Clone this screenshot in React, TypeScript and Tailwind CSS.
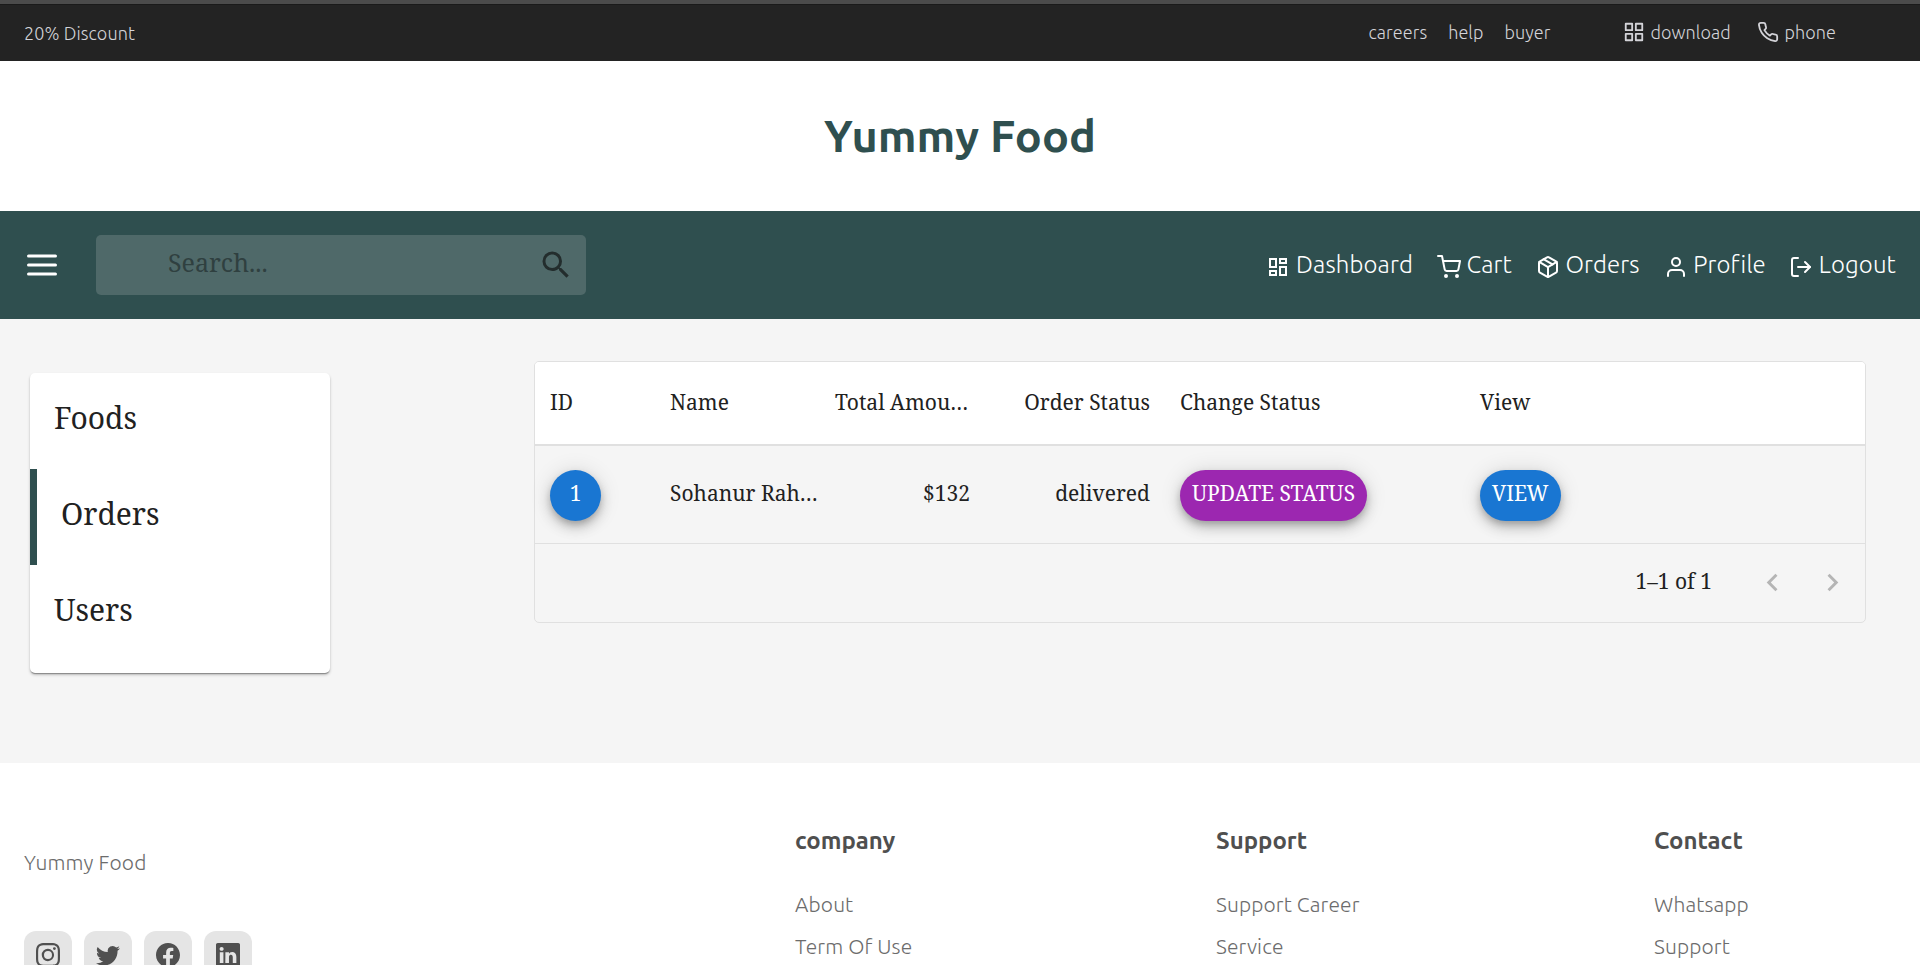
import type { ReactNode } from "react";
import { FiGrid, FiLogOut, FiMenu, FiPackage, FiPhone, FiShoppingCart, FiUser } from "react-icons/fi";
import { MdChevronLeft, MdChevronRight, MdOutlineDashboard, MdSearch } from "react-icons/md";
import { BsFacebook, BsInstagram, BsLinkedin, BsTwitter } from "react-icons/bs";

function TopBar() {
  return (
    <div className="flex h-[61px] items-center justify-between border-t-4 border-[#4b4b4b] bg-[#232323] pb-[2px] pl-6 pr-[84px] text-[18px] leading-[24px] font-light tracking-[0.08px] text-[#d3d3d8] shadow-[inset_0_1px_0_#1a1a1a]">
      <span className="pt-[2px]">20% Discount</span>
      <div className="flex items-center">
        <div className="flex w-[255px] gap-[21px]">
          <span>careers</span>
          <span>help</span>
          <span>buyer</span>
        </div>
        <div className="flex w-[134px] items-center gap-[5px]">
          <FiGrid className="size-[22px]" />
          <span>download</span>
        </div>
        <div className="flex items-center gap-[5px]">
          <FiPhone className="size-[22px]" />
          <span>phone</span>
        </div>
      </div>
    </div>
  );
}

function NavLink({ icon, label, className }: { icon: ReactNode; label: string; className: string }) {
  return (
    <a className={"flex items-center " + className}>
      <span className="pt-[3px]">{icon}</span>
      <span>{label}</span>
    </a>
  );
}

function NavBar() {
  return (
    <nav className="flex h-[108px] items-center justify-between bg-[#2f4f4f] pl-6 pr-6 text-white">
      <div className="flex items-center">
        <FiMenu className="size-9" />
        <div className="ml-9 flex h-[60px] w-[490px] items-center justify-between rounded-[5px] bg-[#4f6969] pl-[72px] pr-3">
          <span className="pb-[6px] font-['Noto_Serif',serif] text-[25px] leading-[32px] text-[#2f4040]">Search...</span>
          <MdSearch className="size-9 text-[#232d2d]" />
        </div>
      </div>
      <div className="flex items-center text-[24px] leading-[32px] font-light tracking-[0.13px]">
        <NavLink className="mr-6 gap-[6px]" icon={<MdOutlineDashboard className="size-6" />} label="Dashboard" />
        <NavLink className="mr-6 gap-[5.5px]" icon={<FiShoppingCart className="size-6" />} label="Cart" />
        <NavLink className="mr-6 gap-[5.5px]" icon={<FiPackage className="size-6" />} label="Orders" />
        <NavLink className="mr-[23.5px] gap-[5.5px]" icon={<FiUser className="size-6" />} label="Profile" />
        <NavLink className="gap-[5.5px]" icon={<FiLogOut className="size-6" />} label="Logout" />
      </div>
    </nav>
  );
}

function Sidebar() {
  return (
    <aside className="mt-[54px] h-[300px] w-[300px] overflow-hidden rounded-[5px] bg-white text-[30px] leading-[40px] text-[#212121] shadow-[0_2px_1px_-1px_rgba(0,0,0,0.2),0_1px_1px_0_rgba(0,0,0,0.14),0_2px_3px_0_rgba(0,0,0,0.22)]">
      <div className="flex h-24 items-center pb-[7px] pl-6">Foods</div>
      <div className="flex h-24 items-center border-l-[7px] border-[#2f4f4f] pb-[7px] pl-6">Orders</div>
      <div className="flex h-24 items-center pb-[7px] pl-6">Users</div>
    </aside>
  );
}

const columns = "grid grid-cols-[120px_180px_150px_180px_300px_1fr] items-center whitespace-nowrap [&>*]:px-[15px]";
const pill =
  "inline-flex h-[51px] min-w-[51px] items-center justify-center rounded-full px-3 pb-[5px] text-white shadow-[0_4px_7px_-1px_rgba(0,0,0,0.2),0_7px_13px_0_rgba(0,0,0,0.16),0_1px_22px_0_rgba(0,0,0,0.12)]";

function OrdersTable() {
  return (
    <section className="mt-[42px] h-[262px] w-[1332px] rounded-[5px] border border-[#e0e0e0] text-[21px] leading-[28px] text-[#212121]">
      <div className={columns + " h-[84px] rounded-t-[4px] border-b-2 border-[#e0e0e0] bg-white pb-[2px]"}>
        <span>ID</span>
        <span>Name</span>
        <span className="!pl-0">Total Amou…</span>
        <span className="text-right">Order Status</span>
        <span>Change Status</span>
        <span>View</span>
      </div>
      <div className={columns + " h-[98px] border-b border-[#e0e0e0]"}>
        <div className="pt-[2px]"><span className={pill + " bg-[#1976d2]"}>1</span></div>
        <span className="pb-[3px]">Sohanur Rah…</span>
        <span className="pb-[3px] text-right">$132</span>
        <span className="pb-[3px] text-right">delivered</span>
        <div className="pt-[2px]"><span className={pill + " bg-[#9c27b0]"}>UPDATE STATUS</span></div>
        <div className="pt-[2px]"><span className={pill + " bg-[#1976d2]"}>VIEW</span></div>
      </div>
      <div className="flex h-[78px] items-center justify-end pr-[15px] pb-[2px] text-[#b5b5b5]">
        <span className="mr-[43px] pb-[2px] text-[#212121]">1–1 of 1</span>
        <MdChevronLeft className="mr-[25px] size-[35px]" />
        <MdChevronRight className="size-[35px]" />
      </div>
    </section>
  );
}

function FooterColumn({ title, links, className }: { title: string; links: string[]; className: string }) {
  return (
    <div className={"pt-[63px] " + className}>
      <h3 className="text-[24px] leading-[30px] font-bold text-[#4f4f4f]">{title}</h3>
      <ul className="mt-[27px] text-[21px] leading-[42px] font-light tracking-[0.12px] text-[#6c6c6c]">
        {links.map((l) => (
          <li key={l}>{l}</li>
        ))}
      </ul>
    </div>
  );
}

function Footer() {
  const social = [BsInstagram, BsTwitter, BsFacebook, BsLinkedin];
  return (
    <footer className="flex h-[202px] overflow-hidden bg-white pl-6">
      <div className="w-[771px] pt-[85px]">
        <p className="text-[21px] leading-[28px] font-light tracking-[0.12px] text-[#6c6c6c]">Yummy Food</p>
        <div className="mt-[55px] flex gap-3">
          {social.map((Icon, i) => (
            <span key={i} className="flex size-12 items-center justify-center rounded-xl bg-[#e5e5e5] text-[#505050]">
              <Icon className="size-6" />
            </span>
          ))}
        </div>
      </div>
      <FooterColumn className="w-[421px]" title="company" links={["About", "Term Of Use"]} />
      <FooterColumn className="w-[438px]" title="Support" links={["Support Career", "Service"]} />
      <FooterColumn className="w-[200px]" title="Contact" links={["Whatsapp", "Support"]} />
    </footer>
  );
}

export default function App() {
  return (
    <div className="h-screen overflow-hidden bg-white font-['Ubuntu','Open_Sans',sans-serif]">
      <TopBar />
      <header className="flex h-[150px] items-center justify-center">
        <h1 className="text-[45px] leading-[60px] font-bold text-[#2f4f4f]">Yummy Food</h1>
      </header>
      <NavBar />
      <main className="flex h-[444px] items-start justify-between bg-[#f5f5f5] pl-[30px] pr-[54px] font-['Noto_Serif',serif]">
        <Sidebar />
        <OrdersTable />
      </main>
      <Footer />
    </div>
  );
}
